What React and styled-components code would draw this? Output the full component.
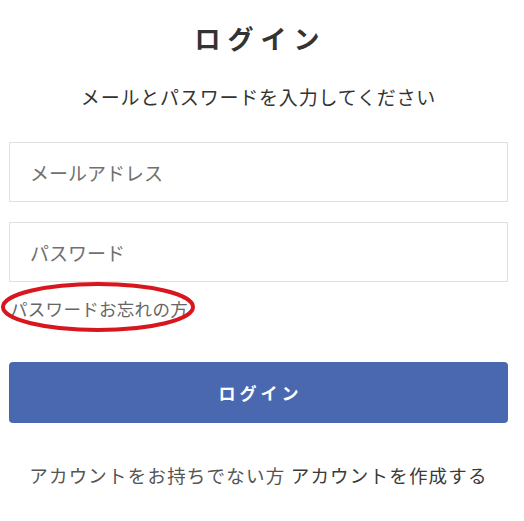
import React from "react";
import styled, { createGlobalStyle } from "styled-components";

const Global = createGlobalStyle`
  html, body { margin: 0; padding: 0; background: #fff; }
  body { font-family: "Noto Sans CJK JP", "Noto Sans", sans-serif; }
  * { box-sizing: border-box; }
`;

const Page = styled.div`
  width: 524px;
  padding: 20px 16px 40px 9px;
  display: flex;
  flex-direction: column;
`;

const Title = styled.h1`
  margin: 0;
  font-size: 26px;
  line-height: 36px;
  font-weight: 700;
  letter-spacing: 7px;
  text-indent: 4px;
  text-align: center;
  color: #333;
`;

const Subtitle = styled.p`
  margin: 27px 0 0;
  font-size: 19px;
  line-height: 28px;
  letter-spacing: 0.8px;
  text-align: center;
  color: #333;
`;

const Form = styled.form`
  margin-top: 31px;
  display: flex;
  flex-direction: column;
  gap: 20px;
`;

const Input = styled.input`
  width: 100%;
  height: 60px;
  border: 1px solid #e0e0e0;
  border-radius: 0;
  padding: 0 20px;
  font-family: inherit;
  font-size: 19px;
  color: #333;
  outline: none;
  &::placeholder { color: #707070; }
`;

const ForgotWrap = styled.div`
  position: relative;
  margin-top: 15px;
  align-self: flex-start;
`;

const ForgotLink = styled.a`
  display: block;
  font-size: 17.5px;
  line-height: 24px;
  letter-spacing: 0.3px;
  color: #666;
  text-decoration: none;
  padding-left: 1px;
`;

const Annotation = styled.svg`
  position: absolute;
  left: -9px;
  top: -16px;
  pointer-events: none;
`;

const Button = styled.button`
  margin-top: 41px;
  width: 100%;
  height: 61px;
  border: none;
  border-radius: 4px;
  background: #4a68b0;
  color: #fff;
  font-family: inherit;
  font-size: 17px;
  font-weight: 700;
  letter-spacing: 4px;
  text-indent: 4px;
  cursor: pointer;
`;

const Footer = styled.p`
  margin: 38px 0 0;
  font-size: 18.5px;
  line-height: 28px;
  letter-spacing: 1.2px;
  text-align: center;
  color: #555;
`;

const FooterLink = styled.a`
  color: #3a3a3a;
  text-decoration: none;
`;

export default function App() {
  return (
    <>
      <Global />
      <Page>
        <Title>ログイン</Title>
        <Subtitle>メールとパスワードを入力してください</Subtitle>
        <Form onSubmit={(e) => e.preventDefault()}>
          <Input type="email" placeholder="メールアドレス" />
          <Input type="password" placeholder="パスワード" />
        </Form>
        <ForgotWrap>
          <ForgotLink href="#">パスワードお忘れの方</ForgotLink>
          <Annotation width="200" height="54" viewBox="0 0 200 54">
            <ellipse cx="98" cy="26" rx="95" ry="23" fill="none" stroke="#d8161e" strokeWidth="4" />
          </Annotation>
        </ForgotWrap>
        <Button type="button">ログイン</Button>
        <Footer>
          アカウントをお持ちでない方 <FooterLink href="#">アカウントを作成する</FooterLink>
        </Footer>
      </Page>
    </>
  );
}
